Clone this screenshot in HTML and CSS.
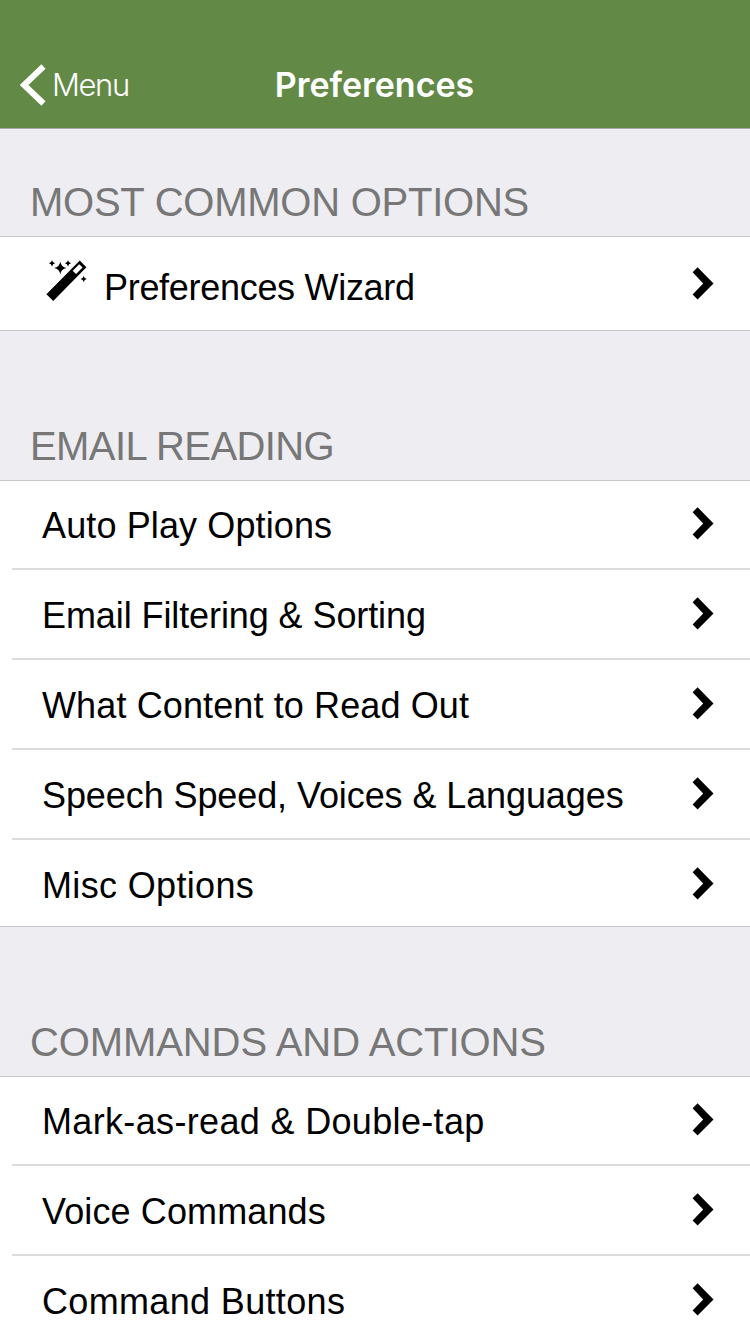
FILE: index.html
```html
<!DOCTYPE html>
<html lang="en">
<head>
    <meta charset="UTF-8">
    <title>Preferences</title>
    <link rel="stylesheet" href="styles.css">
</head>

<body>
    <!-- Chevron shared by all rows -->
    <svg class="defs" width="0" height="0">
        <symbol id="chevron" viewBox="0 0 22 33">
            <path d="M0.6 5.2 L5.6 0.2 L21.5 16.4 L5.6 32.6 L0.6 27.6 L11.2 16.4 Z"/>
        </symbol>
    </svg>

    <header class="navbar">
        <a class="back" href="#">
            <svg class="back-icon" viewBox="0 0 26 42">
                <path d="M23.5 2.5 L4 21 L23.5 39.5" fill="none" stroke="#fff" stroke-width="6"/>
            </svg>
            <span>Menu</span>
        </a>
        <h1>Preferences</h1>
    </header>

    <main>
        <section class="common">
            <h2>MOST COMMON OPTIONS</h2>
            <ul>
                <li>
                    <svg class="wizard-icon" viewBox="0 0 44 44">
                        <path fill-rule="evenodd" d="M2.4 36.3 L35.8 2.4 L42.4 9.2 L9.2 43 Z M28.7 12.7 L32 16 L38.6 9.5 L35.2 6.2 Z"/>
                        <path d="M16.3 3.8 Q17.3 9 22.4 10 Q17.3 11 16.3 16.2 Q15.3 11 10.2 10 Q15.3 9 16.3 3.8 Z"/>
                        <path d="M8 2.2 Q8.6 4.7 11.1 5.3 Q8.6 5.9 8 8.4 Q7.4 5.9 4.9 5.3 Q7.4 4.7 8 2.2 Z"/>
                        <path d="M24 2.2 Q24.6 4.7 27.1 5.3 Q24.6 5.9 24 8.4 Q23.4 5.9 20.9 5.3 Q23.4 4.7 24 2.2 Z"/>
                        <path d="M39.7 17.9 Q40.3 20.4 42.8 21 Q40.3 21.6 39.7 24.1 Q39.1 21.6 36.6 21 Q39.1 20.4 39.7 17.9 Z"/>
                    </svg>
                    <span class="tighter">Preferences Wizard</span>
                    <svg class="chevron"><use href="#chevron"/></svg>
                </li>
            </ul>
        </section>

        <section class="reading">
            <h2>EMAIL READING</h2>
            <ul>
                <li><span class="wide">Auto Play Options</span><svg class="chevron"><use href="#chevron"/></svg></li>
                <li><span class="tight">Email Filtering &amp; Sorting</span><svg class="chevron"><use href="#chevron"/></svg></li>
                <li><span class="wide">What Content to Read Out</span><svg class="chevron"><use href="#chevron"/></svg></li>
                <li><span class="tight">Speech Speed, Voices &amp; Languages</span><svg class="chevron"><use href="#chevron"/></svg></li>
                <li><span class="wider">Misc Options</span><svg class="chevron"><use href="#chevron"/></svg></li>
            </ul>
        </section>

        <section class="commands">
            <h2>COMMANDS AND ACTIONS</h2>
            <ul>
                <li><span class="wider">Mark-as-read &amp; Double-tap</span><svg class="chevron"><use href="#chevron"/></svg></li>
                <li><span class="wide">Voice Commands</span><svg class="chevron"><use href="#chevron"/></svg></li>
                <li><span class="wider">Command Buttons</span><svg class="chevron"><use href="#chevron"/></svg></li>
            </ul>
        </section>
    </main>
</body>
</html>
```
FILE: styles.css
```css
* {
    box-sizing: border-box;
}

body {
    margin: 0;
    height: 1334px;
    overflow: hidden;
    display: flex;
    flex-direction: column;
    background-color: #eeedf2;
    color: #000;
    font-family: "Liberation Sans", Arial, sans-serif;
}

.defs {
    display: none;
}

/* Top bar */
.navbar {
    display: grid;
    grid-template-columns: 1fr auto 1fr;
    align-items: center;
    flex: none;
    height: 129px;
    padding: 41px 21px 0 20px;
    background-color: #638947;
    border-bottom: 1px solid #aaa9ac;
    color: #fff;
}

.back {
    display: flex;
    align-items: center;
    color: #fff;
    font-family: Inter, sans-serif;
    font-size: 31px;
    font-weight: 300;
    letter-spacing: -1.4px;
    text-decoration: none;
}

.back-icon {
    width: 26px;
    height: 42px;
    margin-right: 6px;
}

h1 {
    margin: 0;
    font-family: Inter, sans-serif;
    font-size: 34px;
    font-weight: 600;
    line-height: 40px;
}

/* Sections */
main {
    flex: 1;
    min-height: 0;
    overflow: hidden;
}

h2 {
    margin: 0;
    padding: 94px 0 12px 30px;
    color: #777;
    font-size: 40px;
    font-weight: normal;
    line-height: 43px;
    letter-spacing: -0.6px;
    white-space: nowrap;
}

.common h2 {
    padding-top: 52px;
    letter-spacing: -0.25px;
}

.commands h2 {
    letter-spacing: -0.1px;
}

ul {
    margin: 0;
    padding: 0 0 0 12px;
    list-style: none;
    background-color: #fff;
    border-top: 1px solid #c6c5c9;
    border-bottom: 1px solid #c6c5c9;
}

li {
    display: flex;
    align-items: flex-start;
    height: 90px;
    padding: 27px 36px 0 30px;
    border-bottom: 2px solid #dcdcdd;
    font-size: 36px;
    line-height: 38px;
    white-space: nowrap;
}

li:first-child {
    height: 89px;
    padding-top: 26px;
}

li:last-child {
    height: 86px;
    border-bottom: none;
}

.common li {
    height: 93px;
    padding-top: 30px;
}

.common li span {
    padding-top: 2px;
}

/* Label tracking */
.tighter {
    letter-spacing: -0.3px;
}

.tight {
    letter-spacing: -0.09px;
}

.wide {
    letter-spacing: 0.12px;
}

.wider {
    letter-spacing: 0.34px;
}

.chevron {
    flex: none;
    width: 22px;
    height: 33px;
    margin-left: auto;
}

.wizard-icon {
    flex: none;
    width: 44px;
    height: 44px;
    margin: -9px 16px 0 2px;
}
```
